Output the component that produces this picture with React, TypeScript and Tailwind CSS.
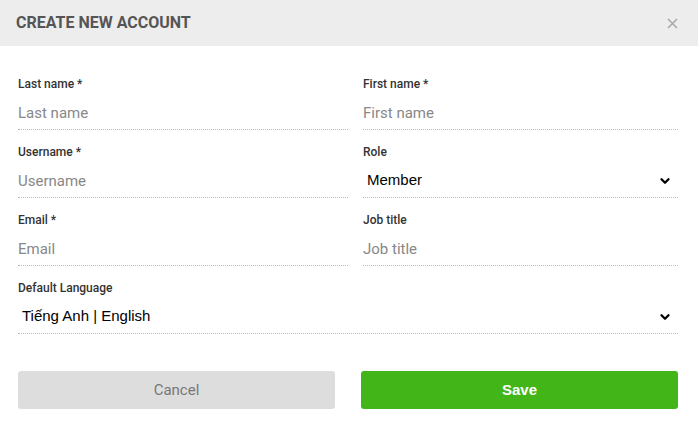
import { ChevronDown } from 'lucide-react';

// Create account modal form

const roboto = "font-['Roboto',sans-serif]";
const arial = "font-['Liberation_Sans',Arial,sans-serif]";

function Field({ label, placeholder }: { label: string; placeholder: string }) {
  return (
    <div>
      <label className={`block h-4 text-[12px] leading-4 font-medium text-[#333] ${roboto}`}>{label}</label>
      <input
        placeholder={placeholder}
        className={`block h-[38px] w-full border-b border-dotted border-[#bbb] pt-1 text-[15px] text-[#333] outline-none placeholder:text-[#888] ${roboto}`}
      />
    </div>
  );
}

function SelectField({ label, value }: { label: string; value: string }) {
  return (
    <div>
      <label className={`block h-4 text-[12px] leading-4 font-medium text-[#333] ${roboto}`}>{label}</label>
      <div className="relative h-[38px] border-b border-dotted border-[#bbb]">
        <select
          defaultValue={value}
          className={`h-full w-full appearance-none bg-white pt-1 pl-1 text-[15px] text-black outline-none ${arial}`}
        >
          <option>{value}</option>
        </select>
        <ChevronDown
          className="pointer-events-none absolute top-[14px] right-1.5 h-3.5 w-3.5 text-black"
          strokeWidth={4}
        />
      </div>
    </div>
  );
}

export default function App() {
  return (
    <div className="h-[435px] w-[698px] bg-white">
      <div className="flex h-[46px] items-center justify-between bg-[#ededed] pr-5 pl-4">
        <h2 className={`text-[16px] font-bold text-[#555] ${roboto}`}>CREATE NEW ACCOUNT</h2>
        <button className="text-[#aaa]" aria-label="close">
          <svg width="11" height="11" viewBox="0 0 11 11">
            <path d="M1 1L10 10M10 1L1 10" stroke="currentColor" strokeWidth="1.6" />
          </svg>
        </button>
      </div>

      <div className="pt-[30px] pr-5 pl-[18px]">
        <div className="grid grid-cols-2 gap-y-[14px]">
          <Field label="Last name *" placeholder="Last name" />
          <div className="pl-[15px]">
            <Field label="First name *" placeholder="First name" />
          </div>
          <Field label="Username *" placeholder="Username" />
          <div className="pl-[15px]">
            <SelectField label="Role" value="Member" />
          </div>
          <Field label="Email *" placeholder="Email" />
          <div className="pl-[15px]">
            <Field label="Job title" placeholder="Job title" />
          </div>
          <div className="col-span-2">
            <SelectField label="Default Language" value="Tiếng Anh | English" />
          </div>
        </div>

        <div className="mt-[37px] grid grid-cols-2 gap-[26px]">
          <button className={`h-[38px] rounded-[3px] bg-[#dddddd] text-[15px] text-[#777] ${roboto}`}>Cancel</button>
          <button className={`h-[38px] rounded-[3px] bg-[#42b619] text-[15px] font-bold text-white ${arial}`}>Save</button>
        </div>
      </div>
    </div>
  );
}
